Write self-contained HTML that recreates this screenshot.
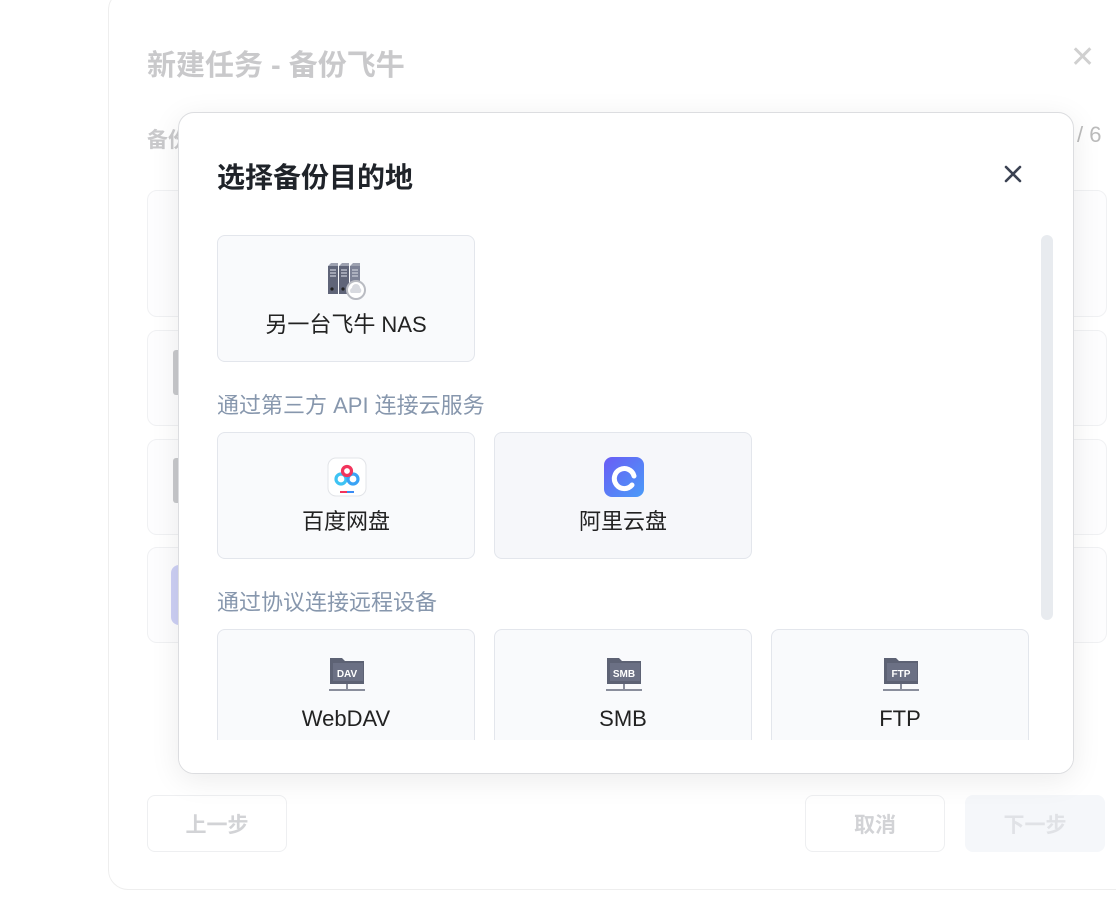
<!DOCTYPE html><html><head><meta charset="utf-8"><style>
*{box-sizing:border-box;margin:0;padding:0}
body{width:1116px;height:906px;background:#fff;position:relative;overflow:hidden;font-family:"Liberation Sans","Noto Sans CJK SC",sans-serif}
.a{position:absolute}
.bg{left:108px;top:-10px;width:1040px;height:900px;border:1px solid #eee;border-radius:20px;background:#fff}
.bt{font-weight:bold;color:#c9c9cb}
.bc{border:1px solid #f0f1f3;border-radius:10px;background:#fdfdfe}
.btn{border:1px solid #eeeff1;border-radius:8px;font-size:21px;font-weight:bold;color:#d2d3d6;display:flex;align-items:center;justify-content:center}
.modal{left:178px;top:112px;width:896px;height:662px;border:1px solid #dcdde0;border-radius:16px;background:#fff;box-shadow:0 6px 30px rgba(0,0,0,.08);overflow:hidden}
.card{position:absolute;width:258px;height:127px;border:1px solid #e3e6ec;border-radius:8px;background:#f9fafc;text-align:center}
.card .ic{position:absolute;left:109px;top:24px;width:40px;height:40px}
.card .t{position:absolute;left:0;right:0;top:75px;font-size:22px;color:#222;line-height:28px}
.lab{position:absolute;left:38px;font-size:22px;color:#8797ad}
</style></head><body>
<div class="a bg"></div>
<div class="a bt" style="left:147px;top:42px;font-size:29px">新建任务 - 备份飞牛</div>
<div class="a bt" style="left:147px;top:124px;font-size:21px">备份</div>
<div class="a" style="left:1077px;top:122px;font-size:22px;color:#bbb">/ 6</div>
<div class="a" style="left:1070px;top:40px;font-size:30px;color:#d0d0d0">✕</div>
<div class="a bc" style="left:147px;top:190px;width:960px;height:127px"></div>
<div class="a bc" style="left:147px;top:330px;width:960px;height:96px"></div>
<div class="a bc" style="left:147px;top:439px;width:960px;height:96px"></div>
<div class="a bc" style="left:147px;top:547px;width:960px;height:96px"></div>
<div class="a" style="left:173px;top:350px;width:8px;height:45px;background:#c8c9cc;border-radius:3px"></div>
<div class="a" style="left:173px;top:458px;width:8px;height:45px;background:#c8c9cc;border-radius:3px"></div>
<div class="a" style="left:171px;top:565px;width:10px;height:60px;background:#cdd0f5;border-radius:8px 0 0 8px"></div>
<div class="a btn" style="left:147px;top:795px;width:140px;height:57px">上一步</div>
<div class="a btn" style="left:805px;top:795px;width:140px;height:57px">取消</div>
<div class="a btn" style="left:965px;top:795px;width:140px;height:57px;background:#f5f7fa;border-color:#f5f7fa;color:#e0e2e6">下一步</div>

<div class="a modal">
<div class="a" style="left:38px;top:43px;font-size:28px;font-weight:bold;color:#1f2329">选择备份目的地</div>
<svg class="a" style="left:824px;top:51px" width="20" height="20" viewBox="0 0 20 20"><path d="M3 3L17 17M17 3L3 17" stroke="#3b4252" stroke-width="2.6" stroke-linecap="round"/></svg>
<div class="a" style="left:862px;top:122px;width:12px;height:385px;border-radius:6px;background:#e8ebef"></div>

<div class="card" style="left:38px;top:122px"><svg class="ic" viewBox="0 0 40 40">
<rect x="1" y="6" width="10" height="28" fill="#5f6478"/><rect x="12" y="6" width="10" height="28" fill="#5f6478"/><rect x="23" y="6" width="10" height="28" fill="#7d8296"/>
<path d="M1 6l3-3h7v3zM12 6l3-3h7v3zM23 6l3-3h7v3z" fill="#9da1b0"/>
<g stroke="#c8cbd6" stroke-width="1.2"><path d="M3 10h6M3 13h6M3 16h6M14 10h6M14 13h6M14 16h6M25 10h6M25 13h6M25 16h6"/></g>
<circle cx="5" cy="29" r="1.6" fill="#222"/><circle cx="16" cy="29" r="1.6" fill="#222"/>
<circle cx="29" cy="30" r="9" fill="#fff" stroke="#b9bbc2" stroke-width="2"/><path d="M24 33a3 3 0 0 1 1-5a4 4 0 0 1 8 0a3 3 0 0 1 0 5z" fill="#d8dae0"/></svg><div class="t">另一台飞牛 NAS</div></div>

<div class="lab" style="top:275px">通过第三方 API 连接云服务</div>
<div class="card" style="left:38px;top:319px"><svg class="ic" viewBox="0 0 40 40"><rect x="1" y="1" width="38" height="38" rx="8" fill="#fff" stroke="#e2e4e8"/>
<circle cx="14" cy="22" r="5" fill="none" stroke="#3ec3f3" stroke-width="3.2"/><circle cx="26" cy="22" r="5" fill="none" stroke="#3aa3f5" stroke-width="3.2"/><circle cx="20" cy="14" r="4.5" fill="none" stroke="#f2345c" stroke-width="3.2"/>
<rect x="13" y="34" width="7" height="2" fill="#f2345c"/><rect x="20" y="34" width="7" height="2" fill="#3a8cf5"/></svg><div class="t">百度网盘</div></div>
<div class="card" style="left:315px;top:319px;background:#f6f7fa"><svg class="ic" viewBox="0 0 40 40"><defs><linearGradient id="g" x1="0" y1="0" x2="1" y2="1"><stop offset="0" stop-color="#6a5cf5"/><stop offset="1" stop-color="#4a9cf8"/></linearGradient></defs><rect x="0" y="0" width="40" height="40" rx="8" fill="url(#g)"/><path d="M28 28A10 10 0 1 1 30 19" fill="none" stroke="#fff" stroke-width="5" stroke-linecap="round"/></svg><div class="t">阿里云盘</div></div>

<div class="lab" style="top:472px">通过协议连接远程设备</div>
<div class="card" style="left:38px;top:516px"><svg class="ic" viewBox="0 0 40 40"><path d="M3 4h12l3 3h19v23H3z" fill="#5d6274"/><rect x="6" y="9" width="30" height="18" fill="#6b7084"/><text x="20" y="23" font-size="10" font-weight="bold" fill="#fff" text-anchor="middle" font-family="Liberation Sans">DAV</text><path d="M2 36h36M20 30v6" stroke="#8a8e9c" stroke-width="2"/></svg><div class="t">WebDAV</div></div>
<div class="card" style="left:315px;top:516px"><svg class="ic" viewBox="0 0 40 40"><path d="M3 4h12l3 3h19v23H3z" fill="#5d6274"/><rect x="6" y="9" width="30" height="18" fill="#6b7084"/><text x="20" y="23" font-size="10" font-weight="bold" fill="#fff" text-anchor="middle" font-family="Liberation Sans">SMB</text><path d="M2 36h36M20 30v6" stroke="#8a8e9c" stroke-width="2"/></svg><div class="t">SMB</div></div>
<div class="card" style="left:592px;top:516px"><svg class="ic" viewBox="0 0 40 40"><path d="M3 4h12l3 3h19v23H3z" fill="#5d6274"/><rect x="6" y="9" width="30" height="18" fill="#6b7084"/><text x="20" y="23" font-size="10" font-weight="bold" fill="#fff" text-anchor="middle" font-family="Liberation Sans">FTP</text><path d="M2 36h36M20 30v6" stroke="#8a8e9c" stroke-width="2"/></svg><div class="t">FTP</div></div>
<div class="a" style="left:0;top:627px;width:896px;height:40px;background:#fff"></div>
</div>
</body></html>
